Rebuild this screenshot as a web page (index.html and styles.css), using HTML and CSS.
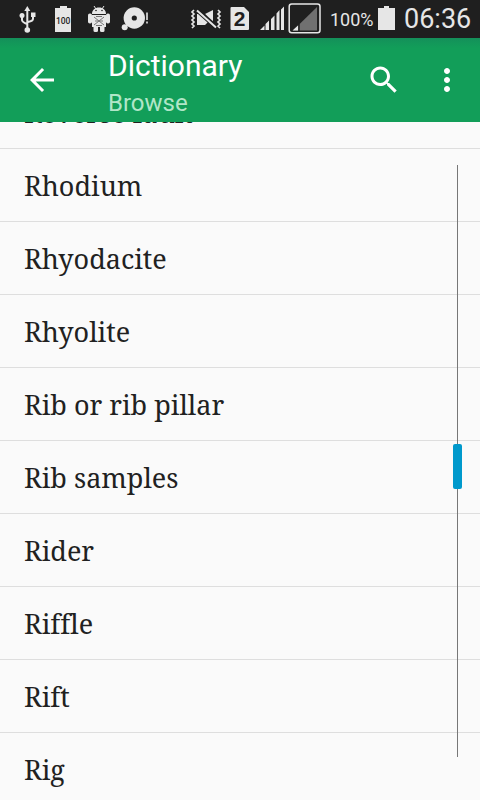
FILE: index.html
```html
<!DOCTYPE html>
<html lang="en">
<head>
    <meta charset="UTF-8">
    <meta name="viewport" content="width=device-width, initial-scale=1.0">
    <title>Dictionary</title>
    <link rel="stylesheet" href="styles.css">
</head>
<body>
    <div class="status-bar">
        <svg class="status-icons" width="326" height="38" viewBox="0 0 326 38">
            <!-- usb -->
            <g fill="none" stroke="#e6e6e6" stroke-width="2">
                <path d="M27.3 9v22M22 16v4q0 2 5 4M33 15v4q0 2-5 3"/>
            </g>
            <g fill="#e6e6e6">
                <path d="M27.3 6l3 5h-6z"/>
                <circle cx="22" cy="15.5" r="2.5"/>
                <path d="M31 12.5h4.500v4.500H31z"/>
                <circle cx="27.3" cy="30" r="2.8"/>
            </g>
            <!-- battery level -->
            <path fill="#e6e6e6" d="M60 6h7v2h4v24H55V8h5z"/>
            <text class="level" x="63.2" y="23.5" text-anchor="middle" textLength="14.5" lengthAdjust="spacingAndGlyphs">100</text>
            <!-- android -->
            <g fill="#e6e6e6">
                <path d="M92 14c0-4 3-6.500 7-6.500s7 2.500 7 6.500zM92 15h14v12H92z"/>
                <rect x="88" y="13.500" width="4" height="10" rx="1.800"/>
                <rect x="106" y="13.500" width="4" height="10" rx="1.800"/>
                <rect x="93.500" y="25" width="4.500" height="7" rx="1.500"/>
                <rect x="100" y="25" width="4.500" height="7" rx="1.500"/>
            </g>
            <path stroke="#e6e6e6" d="M94 6l2 3M104 6l-2 3"/>
            <circle cx="96" cy="10.500" r=".8" fill="#222"/>
            <circle cx="102" cy="10.500" r=".8" fill="#222"/>
            <path fill="none" stroke="#777" d="M94 17l10 8M104 17l-10 8M95 21h8M96 16.500h6M96 25.500h6"/>
            <!-- disc -->
            <circle cx="134.300" cy="18" r="10.700" fill="#e6e6e6"/>
            <circle cx="134.300" cy="18" r="2.600" fill="#1f1f1f"/>
            <circle cx="124.700" cy="27.300" r="3" fill="#e6e6e6"/>
            <path stroke="#e6e6e6" stroke-width="1.600" d="M147 12.500v7.500M147 21.500v2"/>
            <!-- muted, vibrating -->
            <g fill="none" stroke="#e6e6e6" stroke-width="1.700">
                <path d="M194 10l-2 2 2 2-2 2 2 2-2 2 2 2-2 2 2 2-2 2M218 10l2 2-2 2 2 2-2 2 2 2-2 2 2 2-2 2 2 2"/>
            </g>
            <path fill="#e6e6e6" d="M197 14h4l7 8-3 3h-8zM205 14l8-4v14z"/>
            <path stroke="#1f1f1f" stroke-width="4.500" d="M197 10l19 17"/>
            <path stroke="#e6e6e6" stroke-width="2" d="M197 10.500l19 17"/>
            <!-- sim 2 -->
            <path fill="#e6e6e6" d="M231.500 7h12.500l5 5v17q0 1-1 1h-16.500q-1 0-1-1V8q0-1 1-1z"/>
            <text class="sim" x="239.600" y="26" text-anchor="middle">2</text>
            <!-- signal -->
            <path fill="#e6e6e6" d="M260 30l4.500-4.500V30zM265.500 24l3.500-3.500V30h-3.500zM271 19l3.500-3.500V30H271zM276.500 13.500l3-3.500v20h-3zM281 9.500l3-3V30h-3z"/>
            <rect x="289.200" y="4" width="30.800" height="28.800" rx="2.500" fill="none" stroke="#e6e6e6" stroke-width="1.500"/>
            <path fill="#707070" d="M293 30.500L317 7v23.500z"/>
            <path fill="#e6e6e6" d="M292.500 30.500l5.500-5v5z"/>
            <path stroke="#1f1f1f" stroke-width="1.500" d="M299 24v7"/>
        </svg>
        <span class="percent">100%</span>
        <svg class="battery" width="17" height="24" viewBox="0 0 17 24">
            <path fill="#e6e6e6" d="M6 0h5v2h6v22H0V2h6z"/>
        </svg>
        <span class="clock">06:36</span>
    </div>

    <div class="toolbar">
        <svg class="back" width="36" height="36" viewBox="0 0 24 24">
            <path fill="#fff" d="M20 11H7.830l5.590-5.590L12 4l-8 8 8 8 1.410-1.410L7.830 13H20v-2z"/>
        </svg>
        <div class="titles">
            <div class="title">Dictionary</div>
            <div class="subtitle">Browse</div>
        </div>
        <svg class="search" width="36" height="36" viewBox="0 0 24 24">
            <path fill="#fff" d="M15.500 14h-.79l-.28-.27C15.410 12.590 16 11.110 16 9.500 16 5.910 13.090 3 9.500 3S3 5.910 3 9.500 5.910 16 9.500 16c1.610 0 3.090-.59 4.230-1.570l.27.28v.79l5 4.990L20.490 19l-4.990-5zm-6 0C7.010 14 5 11.990 5 9.500S7.010 5 9.500 5 14 7.010 14 9.500 11.990 14 9.500 14z"/>
        </svg>
        <svg class="more" width="36" height="36" viewBox="0 0 24 24">
            <path fill="#fff" d="M12 8c1.100 0 2-.9 2-2s-.9-2-2-2-2 .9-2 2 .9 2 2 2zm0 2c-1.100 0-2 .9-2 2s.9 2 2 2 2-.9 2-2-.9-2-2-2zm0 6c-1.100 0-2 .9-2 2s.9 2 2 2 2-.9 2-2-.9-2-2-2z"/>
        </svg>
    </div>

    <div class="content">
        <ul class="word-list">
            <li>Reverse fault</li>
            <li>Rhodium</li>
            <li>Rhyodacite</li>
            <li>Rhyolite</li>
            <li>Rib or rib pillar</li>
            <li>Rib samples</li>
            <li>Rider</li>
            <li>Riffle</li>
            <li>Rift</li>
            <li>Rig</li>
        </ul>
        <div class="scroll-track">
            <div class="scroll-thumb"></div>
        </div>
    </div>
</body>
</html>
```

FILE: styles.css
```css
* {
    box-sizing: border-box;
}
body {
    margin: 0;
    height: 100vh;
    display: flex;
    flex-direction: column;
    overflow: hidden;
    background: #fafafa;
    font-family: Roboto, sans-serif;
}
.status-bar {
    height: 38px;
    flex: none;
    display: flex;
    align-items: center;
    background: #1f1f1f;
    color: #e6e6e6;
}
.status-icons {
    flex: none;
}
.level {
    font: 500 9.5px Roboto, sans-serif;
    fill: #1f1f1f;
}
.sim {
    font: bold 21px "Liberation Sans", sans-serif;
    fill: #1f1f1f;
}
.percent {
    width: 48px;
    padding-left: 4px;
    font-size: 18px;
}
.battery {
    margin-left: 4px;
    margin-bottom: 2px;
}
.clock {
    margin-left: 9px;
    font-size: 27px;
}
.toolbar {
    height: 84px;
    flex: none;
    display: flex;
    align-items: center;
    padding: 0 15px 0 24px;
    background: linear-gradient(#14905a 0, #129e59 10px);
}
.titles {
    flex: 1;
    margin-left: 48px;
    padding-top: 8px;
}
.title {
    font-size: 30px;
    line-height: 38px;
    color: #fff;
}
.subtitle {
    font-size: 24px;
    line-height: 36px;
    color: #b0e6c8;
}
.more {
    margin-left: 27px;
}
.content {
    flex: 1;
    position: relative;
    overflow: hidden;
}
.word-list {
    list-style: none;
    margin: -46px 0 0;
    padding: 0;
}
.word-list li {
    height: 73px;
    padding-left: 24px;
    border-bottom: 1px solid #dedede;
    font-family: "Noto Serif", "Droid Serif", "DejaVu Serif Condensed", "DejaVu Serif", serif;
    font-size: 27px;
    font-variant-ligatures: none;
    line-height: 74px;
    color: #212121;
}
/* fast scroll handle over the list */
.scroll-track {
    position: absolute;
    top: 43px;
    right: 22px;
    width: 1px;
    height: 592px;
    background: #777;
}
.scroll-thumb {
    position: absolute;
    top: 279px;
    left: -4px;
    width: 9px;
    height: 45px;
    border-radius: 2px;
    background: #0099cc;
}
```
